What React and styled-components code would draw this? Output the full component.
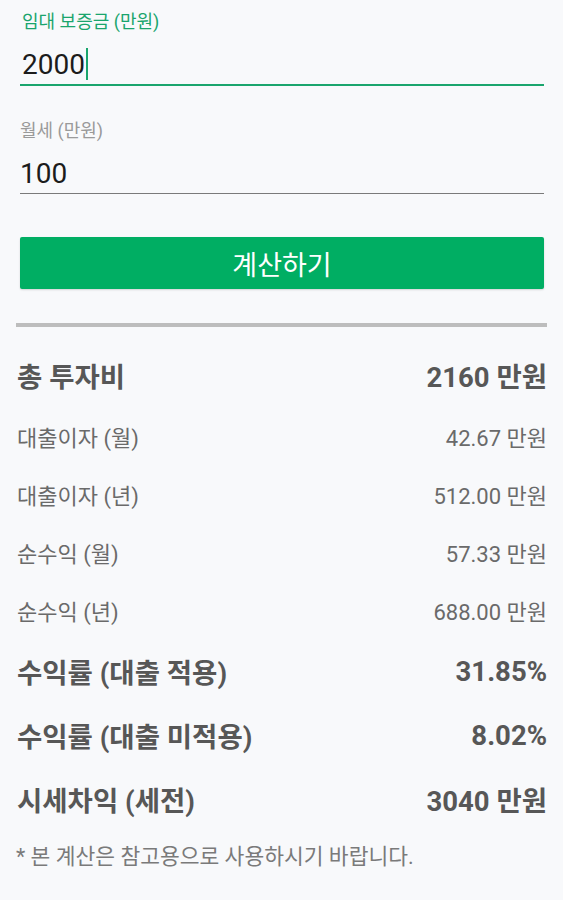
import React from "react";
import styled, { createGlobalStyle } from "styled-components";

const GlobalStyle = createGlobalStyle`
  html, body {
    margin: 0;
    padding: 0;
    background: #f8f9fb;
  }
  body {
    font-family: Roboto, "Noto Sans CJK KR", "Noto Sans", sans-serif;
  }
`;

const Page = styled.div`
  width: 563px;
  min-height: 900px;
  background: #f8f9fb;
  box-sizing: border-box;
  padding-top: 12px;
`;

const Form = styled.div`
  padding: 0 19px 0 20px;
`;

const Field = styled.div`
  display: flex;
  flex-direction: column;
  gap: 12px;
  margin-bottom: ${({ $gap }) => $gap}px;
`;

const Label = styled.label`
  font-size: 18px;
  line-height: 20px;
  color: ${({ $active }) => ($active ? "#1aa56d" : "#9a9a9a")};
  padding-left: ${({ $active }) => ($active ? 2 : 0)}px;
`;

const Input = styled.div`
  display: flex;
  align-items: center;
  height: 40px;
  font-size: 28px;
  color: #1c1c1c;
  padding-left: ${({ $active }) => ($active ? 2 : 0)}px;
  border-bottom: ${({ $active }) => ($active ? "2px solid #1aa56d" : "1px solid #7a7a7a")};
`;

const Caret = styled.span`
  display: inline-block;
  width: 2px;
  height: 32px;
  margin-left: 1px;
  background: #1aa56d;
`;

const Button = styled.button`
  display: block;
  width: 100%;
  height: 52px;
  border: none;
  border-radius: 2px;
  background: #00ae63;
  color: #ffffff;
  font-family: inherit;
  font-size: 27px;
  box-shadow: 0 1px 2px rgba(0, 0, 0, 0.15);
`;

const Divider = styled.hr`
  margin: 34px 16px 16px 16px;
  height: 4px;
  border: none;
  background: #bdbdbd;
`;

const Results = styled.div`
  padding: 0 16px 0 17px;
`;

const Row = styled.div`
  display: flex;
  justify-content: space-between;
  align-items: center;
  height: ${({ $big }) => ($big ? 64 : 58)}px;
  font-size: ${({ $big }) => ($big ? 27.5 : 22)}px;
  font-weight: ${({ $big }) => ($big ? 700 : 400)};
  color: ${({ $big }) => ($big ? "#575757" : "#6a6a6a")};
`;

const Note = styled.p`
  margin: 14px 0 0 16px;
  font-size: 21.5px;
  line-height: 24px;
  color: #7a7a7a;
`;

const rows = [
  { label: "총 투자비", value: "2160 만원", big: true },
  { label: "대출이자 (월)", value: "42.67 만원" },
  { label: "대출이자 (년)", value: "512.00 만원" },
  { label: "순수익 (월)", value: "57.33 만원" },
  { label: "순수익 (년)", value: "688.00 만원" },
  { label: "수익률 (대출 적용)", value: "31.85%", big: true },
  { label: "수익률 (대출 미적용)", value: "8.02%", big: true },
  { label: "시세차익 (세전)", value: "3040 만원", big: true },
];

export default function App() {
  return (
    <Page>
      <GlobalStyle />
      <Form>
        <Field $gap={35}>
          <Label $active>임대 보증금 (만원)</Label>
          <Input $active>
            2000
            <Caret />
          </Input>
        </Field>
        <Field $gap={43}>
          <Label>월세 (만원)</Label>
          <Input>100</Input>
        </Field>
        <Button>계산하기</Button>
      </Form>
      <Divider />
      <Results>
        {rows.map((r) => (
          <Row key={r.label} $big={r.big}>
            <span>{r.label}</span>
            <span>{r.value}</span>
          </Row>
        ))}
      </Results>
      <Note>* 본 계산은 참고용으로 사용하시기 바랍니다.</Note>
    </Page>
  );
}
